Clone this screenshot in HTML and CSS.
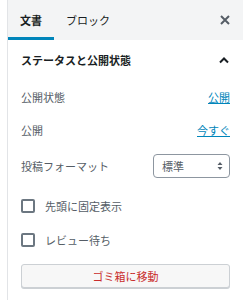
FILE: index.html
```html
<!DOCTYPE html>
<html lang="ja">
<head>
    <meta charset="UTF-8">
    <meta name="viewport" content="width=device-width, initial-scale=1.0">
    <title>文書設定</title>
    <link rel="stylesheet" href="styles.css">
</head>
<body>
    <div class="sidebar">
        <div class="tabs">
            <button class="tab active">文書</button>
            <button class="tab">ブロック</button>
            <button class="close" aria-label="閉じる">
                <svg width="12" height="12" viewBox="0 0 12 12">
                    <path d="M2 2 L10 10 M10 2 L2 10" stroke="#555d66" stroke-width="2"/>
                </svg>
            </button>
        </div>

        <div class="panel">
            <div class="panel-title">
                <span>ステータスと公開状態</span>
                <svg width="12" height="8" viewBox="0 0 12 8">
                    <path d="M2 6.5 L6 2.5 L10 6.5" fill="none" stroke="#191e23" stroke-width="2"/>
                </svg>
            </div>

            <div class="row">
                <span class="label">公開状態</span>
                <a href="#" class="link">公開</a>
            </div>
            <div class="row short">
                <span class="label">公開</span>
                <a href="#" class="link">今すぐ</a>
            </div>
            <div class="row tall">
                <label class="label" for="format">投稿フォーマット</label>
                <div class="select" id="format">
                    <span>標準</span>
                    <svg width="6" height="10" viewBox="0 0 6 10">
                        <path d="M0.5 4 L3 1 L5.5 4 Z M0.5 6 L3 9 L5.5 6 Z" fill="#555d66"/>
                    </svg>
                </div>
            </div>

            <label class="check first">
                <span class="box"></span>
                先頭に固定表示
            </label>
            <label class="check">
                <span class="box"></span>
                レビュー待ち
            </label>

            <button class="trash">ゴミ箱に移動</button>
        </div>
    </div>
</body>
</html>
```

FILE: styles.css
```css
body {
    font-family: "Noto Sans CJK JP", "Liberation Sans", sans-serif;
    background-color: white;
    margin: 0;
    padding: 0;
}

.sidebar {
    margin-left: 7px;
    border-left: 1px solid #e2e4e7;
    height: 300px;
}

.tabs {
    display: flex;
    align-items: center;
    height: 40px;
    background-color: #f3f4f5;
}

.tab {
    height: 40px;
    padding: 3px 12px 0;
    border: none;
    background: none;
    font-family: inherit;
    font-size: 11px;
    color: #191e23;
    border-bottom: 3px solid transparent;
}

.tab.active {
    font-weight: bold;
    border-bottom-color: #0085ba;
}

.close {
    margin-left: auto;
    margin-right: 8px;
    border: none;
    background: none;
    padding: 4px;
    display: flex;
}

.panel {
    padding: 0 13px;
}

.panel-title {
    display: flex;
    justify-content: space-between;
    align-items: center;
    height: 40px;
    font-size: 11px;
    font-weight: bold;
    color: #191e23;
}

.row {
    display: flex;
    justify-content: space-between;
    align-items: center;
    height: 34px;
    font-size: 11px;
}

.row.short {
    height: 32px;
}

.row.tall {
    height: 40px;
}

.label {
    color: #555d66;
}

.link {
    color: #0085ba;
    text-decoration: underline;
}

.select {
    width: 77px;
    height: 24px;
    box-sizing: border-box;
    border: 1px solid #8d96a0;
    border-radius: 4px;
    display: flex;
    justify-content: space-between;
    align-items: center;
    padding: 0 6px 0 8px;
    color: #555d66;
}

.check {
    display: flex;
    align-items: center;
    gap: 10px;
    height: 28px;
    font-size: 11px;
    color: #555d66;
}

.check.first {
    height: 40px;
}

.box {
    width: 14px;
    height: 14px;
    box-sizing: border-box;
    border: 2px solid #6c7781;
    border-radius: 2px;
}

.trash {
    width: 100%;
    height: 24px;
    margin-top: 10px;
    border: 1px solid #ccd0d4;
    border-radius: 3px;
    background-color: #f7f7f7;
    box-shadow: 0 1px 0 #ccd0d4;
    font-family: inherit;
    font-size: 11px;
    color: #c92c2c;
}
```
